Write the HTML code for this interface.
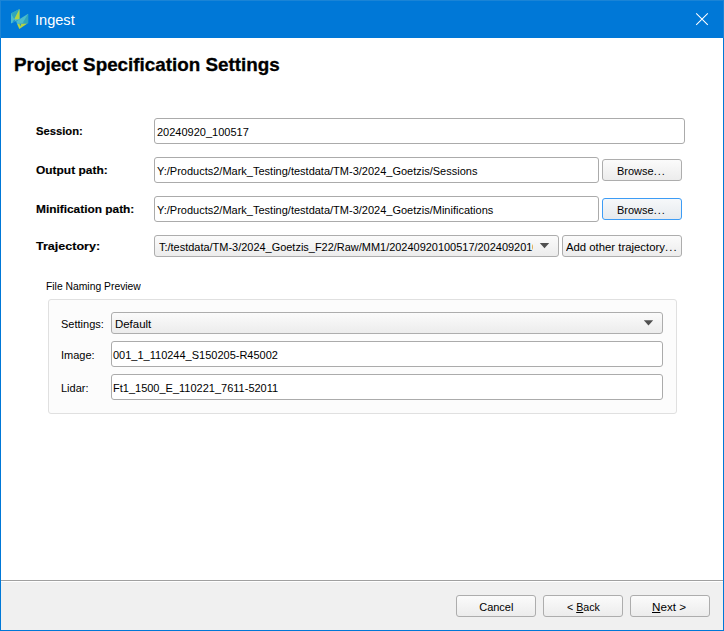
<!DOCTYPE html>
<html><head><meta charset="utf-8">
<style>
*{margin:0;padding:0;box-sizing:border-box}
html,body{width:724px;height:631px;overflow:hidden;background:#fff}
body{position:relative;font-family:"Liberation Sans",sans-serif;color:#000}
.a{position:absolute}
.t{position:absolute;white-space:pre;line-height:1;font-family:"Liberation Sans",sans-serif;transform-origin:0 0}
.b{font-weight:bold;-webkit-text-stroke:0.15px #000}
.inp{position:absolute;border:1px solid #ababab;border-radius:3px;background:#fff}
.btn{position:absolute;border:1px solid #adadad;border-radius:3px;background:linear-gradient(#fbfbfb,#ececec)}
.cmb{position:absolute;border:1px solid #adadad;border-radius:3px;background:linear-gradient(#fbfbfb,#ececec)}
</style></head><body>
<!-- window frame -->
<div class="a" style="left:0;top:0;width:724px;height:38px;background:#0078d7"></div>
<div class="a" style="left:0;top:0;width:1px;height:631px;background:#0078d7"></div>
<div class="a" style="left:723px;top:0;width:1px;height:631px;background:#0078d7"></div>
<div class="a" style="left:0;top:630px;width:724px;height:1px;background:#0078d7"></div>
<div class="a" style="left:0;top:0;width:724px;height:1px;background:#1a84d6"></div>
<div class="a" style="left:0;top:0;width:1px;height:38px;background:#1a84d6"></div>
<div class="a" style="left:723px;top:0;width:1px;height:38px;background:#1a84d6"></div>
<!-- icon -->
<svg class="a" style="left:10px;top:8px" width="20" height="22" viewBox="10 8 20 22">
  <polygon points="11,13.6 19.5,9 19.5,19.3 11,23.5" fill="#4dbccb"/>
  <polygon points="11,13.6 19.5,9 14.3,19.2" fill="#2fa6bb"/>
  <polygon points="19.5,9 19.5,19.3 14.3,19.2" fill="#b2d345"/>
  <polygon points="12.3,22.6 14.3,19.6 15.6,21.6" fill="#1f8fd0"/>
  <polygon points="16.2,21.2 28.1,13.8 28.1,23.3 17.1,23.9" fill="#4dbccb"/>
  <polygon points="28.1,13.8 28.1,23.3 22.8,22.8" fill="#2fa6bb"/>
  <polygon points="17.1,23.9 27.5,23.5 19.3,28.9" fill="#b2d345"/>
  <polygon points="19.6,24 21.2,23.9 20.2,26.4" fill="#1f8fd0"/>
</svg>
<div class="t" style="left:35px;top:11.8px;font-size:15.5px;color:#fff;transform:scaleX(0.94)">Ingest</div>
<!-- close -->
<svg class="a" style="left:690px;top:7px" width="24" height="24" viewBox="0 0 24 24">
  <path d="M6.2 6.3 L17.8 17.9 M17.8 6.3 L6.2 17.9" stroke="#fff" stroke-width="1.05" fill="none"/>
</svg>

<div class="t b" style="left:14px;top:56px;font-size:18.5px;transform:scaleX(1.018);-webkit-text-stroke:0.3px #000">Project Specification Settings</div>

<div class="t b" style="left:36px;top:126px;font-size:11px;transform:scaleX(1.02)">Session:</div>
<div class="inp" style="left:154px;top:118px;width:531px;height:26px"></div>
<div class="t" style="left:157px;top:127px;font-size:11px">20240920_100517</div>

<div class="t b" style="left:35.5px;top:165px;font-size:11px;transform:scaleX(1.086)">Output path:</div>
<div class="inp" style="left:154px;top:157px;width:445px;height:26px"></div>
<div class="t" style="left:157px;top:166px;font-size:11px">Y:/Products2/Mark_Testing/testdata/TM-3/2024_Goetzis/Sessions</div>
<div class="btn" style="left:602px;top:159px;width:80px;height:22px"></div>
<div class="t" style="left:617px;top:166px;font-size:11px">Browse<span style="letter-spacing:1px">...</span></div>

<div class="t b" style="left:36.3px;top:204px;font-size:11px;transform:scaleX(1.08)">Minification path:</div>
<div class="inp" style="left:154px;top:196px;width:445px;height:26px"></div>
<div class="t" style="left:157px;top:205px;font-size:11px">Y:/Products2/Mark_Testing/testdata/TM-3/2024_Goetzis/Minifications</div>
<div class="btn" style="left:602px;top:198px;width:80px;height:22px;border-color:#3d9cf5;background:linear-gradient(#f6f8fa,#e6eaee)"></div>
<div class="t" style="left:617px;top:205px;font-size:11px">Browse<span style="letter-spacing:1px">...</span></div>

<div class="t b" style="left:35.8px;top:241px;font-size:11px;transform:scaleX(1.14)">Trajectory:</div>
<div class="cmb" style="left:154px;top:235px;width:405px;height:22px"></div>
<div class="a" style="left:158px;top:238px;width:375px;height:16px;overflow:hidden"><div class="t" style="left:0.6px;top:4px;font-size:11px;transform:scaleX(0.996)">T:/testdata/TM-3/2024_Goetzis_F22/Raw/MM1/20240920100517/20240920100517</div></div>
<svg class="a" style="left:0;top:0" width="724" height="631"><polygon points="539.8,243 549.2,243 544.5,248.3" fill="#505050"/></svg>
<div class="btn" style="left:562px;top:235px;width:120px;height:22px"></div>
<div class="t" style="left:565.5px;top:242px;font-size:11px;transform:scaleX(1.03)">Add other trajectory<span style="letter-spacing:1.1px">...</span></div>

<div class="t" style="left:46px;top:281px;font-size:11px;transform:scaleX(0.94)">File Naming Preview</div>
<div class="a" style="left:48px;top:299px;width:629px;height:115px;border:1px solid #e0e0e0;border-radius:3px;background:#fcfcfc"></div>

<div class="t" style="left:61px;top:319px;font-size:11px">Settings:</div>
<div class="cmb" style="left:111px;top:312px;width:552px;height:22px"></div>
<div class="t" style="left:114.5px;top:319px;font-size:11px;transform:scaleX(1.04)">Default</div>
<svg class="a" style="left:0;top:0" width="724" height="631"><polygon points="643.8,320.2 653.2,320.2 648.5,325.5" fill="#505050"/></svg>


<div class="t" style="left:61px;top:350px;font-size:11px">Image:</div>
<div class="inp" style="left:111px;top:341px;width:552px;height:26px"></div>
<div class="t" style="left:113px;top:350px;font-size:11px">001_1_110244_S150205-R45002</div>

<div class="t" style="left:61px;top:383px;font-size:11px">Lidar:</div>
<div class="inp" style="left:111px;top:374px;width:552px;height:26px"></div>
<div class="t" style="left:113px;top:383px;font-size:11px">Ft1_1500_E_110221_7611-52011</div>

<!-- bottom bar -->
<div class="a" style="left:1px;top:580px;width:722px;height:1px;background:#a0a0a0"></div>
<div class="a" style="left:1px;top:582px;width:722px;height:48px;background:#f0f0f0"></div>
<div class="btn" style="left:456px;top:595px;width:80px;height:22px"></div>
<div class="t" style="left:479.2px;top:602px;font-size:11px">Cancel</div>
<div class="btn" style="left:543px;top:595px;width:80px;height:22px"></div>
<div class="t" style="left:566.8px;top:602px;font-size:11px;transform:scaleX(0.97)">&lt; <u>B</u>ack</div>
<div class="btn" style="left:630px;top:595px;width:80px;height:22px"></div>
<div class="t" style="left:652px;top:602px;font-size:11px;transform:scaleX(1.06)"><u>N</u>ext &gt;</div>
</body></html>
